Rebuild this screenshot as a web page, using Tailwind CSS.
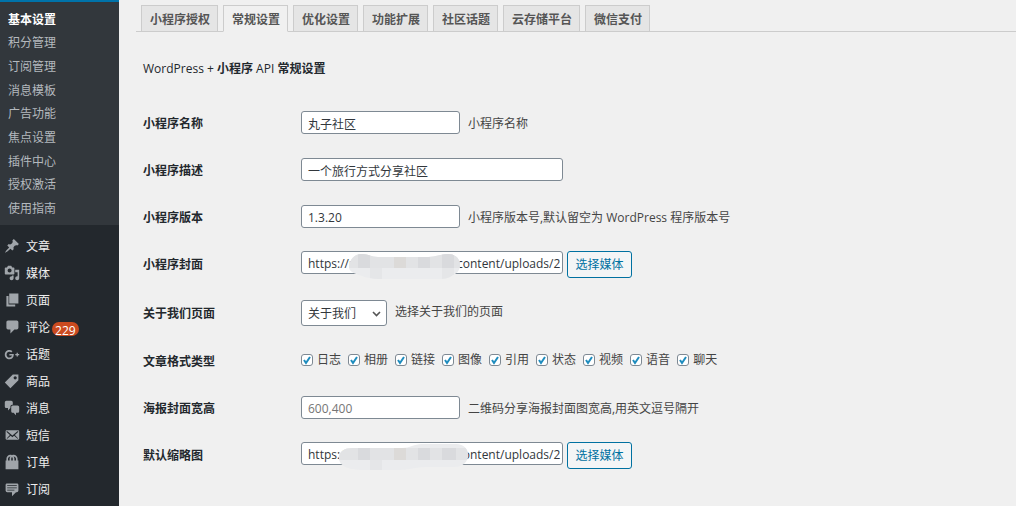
<!DOCTYPE html>
<html lang="zh-CN">
<head>
<meta charset="utf-8">
<title>常规设置</title>
<script src="https://cdn.jsdelivr.net/npm/@tailwindcss/browser@4"></script>
</head>
<body class="flex min-h-screen bg-[#f0f0f0] font-['Open_Sans','Noto_Sans_CJK_SC',sans-serif] text-xs text-[#444]">
<nav class="w-[119px] shrink-0 bg-[#23282d]" aria-label="主菜单">
  <ul class="grid h-[225px] auto-rows-fr border-t-2 border-[#0073aa] bg-[#32373c] pt-[6px] pb-1 pl-2 text-[#b4b9be]">
    <li class="flex items-center"><a href="#" class="font-bold text-white">基本设置</a></li>
    <li class="flex items-center"><a href="#">积分管理</a></li>
    <li class="flex items-center"><a href="#">订阅管理</a></li>
    <li class="flex items-center"><a href="#">消息模板</a></li>
    <li class="flex items-center"><a href="#">广告功能</a></li>
    <li class="flex items-center"><a href="#">焦点设置</a></li>
    <li class="flex items-center"><a href="#">插件中心</a></li>
    <li class="flex items-center"><a href="#">授权激活</a></li>
    <li class="flex items-center"><a href="#">使用指南</a></li>
  </ul>
  <ul class="pt-2 text-[#eee] [&_a]:flex [&_a]:h-[27px] [&_a]:items-center [&_a]:gap-[6px] [&_a]:pl-1 [&_svg]:mb-[2px] [&_svg]:size-4 [&_svg]:fill-[#a0a5aa]">
    <li><a href="#"><svg viewBox="0 0 20 20"><path d="M10.44 3.02l1.82-1.82 6.36 6.35-1.83 1.82c-1.05-.68-2.48-.57-3.41.36l-.75.75c-.92.93-1.04 2.35-.35 3.41l-1.83 1.82-2.41-2.41-2.8 2.79c-.42.42-3.38 2.71-3.8 2.29s1.86-3.39 2.28-3.81l2.79-2.79L4.1 9.36l1.83-1.82c1.05.69 2.48.57 3.4-.36l.75-.75c.93-.92 1.05-2.35.36-3.41z"/></svg>文章</a></li>
    <li><a href="#"><svg viewBox="0 0 20 20"><path d="M13 11V4c0-.55-.45-1-1-1h-1.67L9 1H5L3.67 3H2c-.55 0-1 .45-1 1v7c0 .55.45 1 1 1h10c.55 0 1-.45 1-1zM7 4.500c1.38 0 2.500 1.12 2.500 2.500S8.38 9.500 7 9.500 4.500 8.38 4.500 7 5.62 4.500 7 4.500zM14 6h5v10.500c0 1.38-1.12 2.500-2.500 2.500S14 17.88 14 16.500s1.12-2.500 2.500-2.500c.17 0 .34.02.5.05V9h-3V6zm-4 8.05V13h2v3.500c0 1.38-1.12 2.500-2.500 2.500S7 17.88 7 16.500 8.12 14 9.500 14c.17 0 .34.02.5.05z"/></svg>媒体</a></li>
    <li><a href="#"><svg viewBox="0 0 20 20"><path d="M6.500 14.500V2H18v12.500H6.500zm-.8 1H14V18H3V5h2.700v10.500z"/></svg>页面</a></li>
    <li><a href="#"><svg viewBox="0 0 20 20"><path d="M5 2h11c1.1 0 2 .9 2 2v7c0 1.1-.9 2-2 2h-3l-5 5v-5H5c-1.1 0-2-.9-2-2V4c0-1.1.9-2 2-2z"/></svg><span class="flex items-center gap-[2px]">评论<span class="mt-[2px] h-[14px] rounded-full bg-[#ca4a1f] px-[3px] text-xs leading-[18px] text-white">229</span></span></a></li>
    <li><a href="#"><svg viewBox="0 0 20 20"><path d="M6.73 10h5.4c.05.29.09.57.09.95 0 3.27-2.19 5.6-5.49 5.6-3.17 0-5.73-2.57-5.73-5.73 0-3.17 2.56-5.73 5.73-5.73 1.54 0 2.84.57 3.83 1.5l-1.55 1.5c-.43-.41-1.17-.89-2.28-.89-1.96 0-3.55 1.62-3.55 3.62 0 1.99 1.59 3.61 3.55 3.61 2.26 0 3.11-1.62 3.24-2.47H6.73V10zM19 10v1.64h-1.64v1.63h-1.63v-1.63h-1.64V10h1.64V8.36h1.63V10H19z"/></svg>话题</a></li>
    <li><a href="#"><svg viewBox="0 0 20 20"><path fill-rule="evenodd" d="M11 2h7v7L8 19l-7-7zm3 6c1.1 0 2-.9 2-2s-.9-2-2-2-2 .9-2 2 .9 2 2 2z"/></svg>商品</a></li>
    <li><a href="#"><svg viewBox="0 0 20 20"><path d="M11 6h-.82C9.07 6 8 7.2 8 8.16V10l-3 3v-3H3c-1.1 0-2-.9-2-2V3c0-1.1.9-2 2-2h6c1.1 0 2 .9 2 2v3zm0 1h6c1.1 0 2 .9 2 2v5c0 1.1-.9 2-2 2h-2v3l-3-3h-1c-1.1 0-2-.9-2-2V9c0-1.1.9-2 2-2z"/></svg>消息</a></li>
    <li><a href="#"><svg viewBox="0 0 20 20"><path d="M19 14.5v-9c0-.83-.67-1.5-1.5-1.5H3.49c-.83 0-1.5.67-1.5 1.5v9c0 .83.67 1.5 1.5 1.5H17.5c.83 0 1.5-.67 1.5-1.5zm-1.31-9.11c.33.33.15.67-.03.84L13.6 9.95l3.9 4.06c.12.14.2.36.06.51-.13.16-.43.15-.56.05l-4.37-3.73-2.14 1.95-2.13-1.95-4.37 3.73c-.13.1-.43.11-.56-.05-.14-.15-.06-.37.06-.51l3.9-4.06-4.06-3.72c-.18-.17-.36-.51-.03-.84s.67-.17.95.07l6.24 5.04 6.25-5.04c.28-.24.62-.4.95-.07z"/></svg>短信</a></li>
    <li><a href="#"><svg viewBox="0 0 20 20"><path d="M17 8h1v11H2V8h1V6c0-2.76 2.24-5 5-5 .71 0 1.39.15 2 .42.61-.27 1.29-.42 2-.42 2.76 0 5 2.24 5 5v2zM5 6v2h2V6c0-1.13.39-2.16 1.02-3H8C6.35 3 5 4.35 5 6zm10 2V6c0-1.65-1.35-3-3-3h-.02c.63.84 1.02 1.87 1.02 3v2h2zm-5-4.22C9.39 4.33 9 5.12 9 6v2h2V6c0-.88-.39-1.67-1-2.22z"/></svg>订单</a></li>
    <li><a href="#"><svg viewBox="0 0 20 20"><path d="M4 3h12c.55 0 1.02.2 1.41.59S18 4.45 18 5v7c0 .55-.2 1.02-.59 1.41S16.55 14 16 14h-1l-5 5v-5H4c-.55 0-1.02-.2-1.41-.59S2 12.55 2 12V5c0-.55.2-1.02.59-1.41S3.45 3 4 3zm12 2H4v1h12V5zm0 3H4v1h12V8zm-3 3H4v1h9v-1z"/></svg>订阅</a></li>
  </ul>
</nav>
<main class="min-w-0 flex-1 pt-[5px] pl-[17px]">
  <nav class="flex gap-[5px] border-b border-[#ccc] pl-[5px] font-bold text-[#555] [&_a]:-mb-px [&_a]:h-[27px] [&_a]:border [&_a]:border-[#ccc] [&_a]:pr-[7px] [&_a]:pl-[8px] [&_a]:leading-[27px]" aria-label="设置分类">
    <a href="#" class="bg-[#e5e5e5]">小程序授权</a>
    <a href="#" aria-current="page" class="border-b-[#f0f0f0]! bg-[#f0f0f0]">常规设置</a>
    <a href="#" class="bg-[#e5e5e5]">优化设置</a>
    <a href="#" class="bg-[#e5e5e5]">功能扩展</a>
    <a href="#" class="bg-[#e5e5e5]">社区话题</a>
    <a href="#" class="bg-[#e5e5e5]">云存储平台</a>
    <a href="#" class="bg-[#e5e5e5]">微信支付</a>
  </nav>
  <form class="pl-[7px]">
    <h1 class="mt-7 mb-[22px] leading-[18px] text-[#23282d]">WordPress + <b>小程序</b> API <b>常规设置</b></h1>
    <div class="[&>div]:flex [&>div]:h-[47px] [&>div]:items-center [&>div>:first-child]:w-[158px] [&>div>:first-child]:shrink-0 [&>div>:first-child]:font-bold [&>div>:first-child]:text-[#23282d] [&_input[type=text]]:mb-[2px] [&_input[type=text]]:h-[23px] [&_input[type=text]]:rounded-[3px] [&_input[type=text]]:border [&_input[type=text]]:border-[#7e8993] [&_input[type=text]]:bg-white [&_input[type=text]]:pt-[2px] [&_input[type=text]]:pl-[6px] [&_input[type=text]]:text-[#32373c]">
      <div><label for="name">小程序名称</label><input id="name" type="text" value="丸子社区" class="mr-2 w-[159px]"><span>小程序名称</span></div>
      <div><label for="desc">小程序描述</label><input id="desc" type="text" value="一个旅行方式分享社区" class="w-[262px]"></div>
      <div><label for="ver">小程序版本</label><input id="ver" type="text" value="1.3.20" class="mr-2 w-[159px]"><span>小程序版本号,默认留空为 WordPress 程序版本号</span></div>
      <div><label for="cover">小程序封面</label>
        <span class="relative flex items-start gap-1"><input id="cover" type="text" value="https://r.example.com/wp-content/uploads/2" class="w-[262px]">
          <svg class="absolute top-[2px] left-[47px] h-[28px] w-[113px]" viewBox="0 0 113 28"><defs><clipPath id="m1"><path d="M1 14C2 5 7 1 14 1c7 0 9 3 16 3h50c8 0 12-3 20-3 8 0 12 5 12 11s-4 9-7 10c-5 4-9 4-17 4H34c-12 0-17-2-23-4C5 20 1 18 1 14z"/></clipPath></defs><g clip-path="url(#m1)"><path fill="#ebecee" d="M0 0h113v28H0z"/><path fill="#e2e3e5" d="M0 0h113v15H0z"/><path fill="#d9dadd" d="M10 0h12v15H10zM70 4h12v11H70zM94 0h12v15H94z"/><path fill="#dcdad8" d="M46 4h12v11H46z"/><path fill="#e5e6e8" d="M22 15h12v13H22zM94 15h12v13H94z"/></g></svg>
          <button type="button" class="h-[27px] w-[65px] rounded-[3px] border border-[#0071a1] bg-[#f3f5f6] text-[#0071a1]">选择媒体</button></span></div>
      <div class="h-[50px]!"><label for="about" class="pt-[2px]">关于我们页面</label>
        <span class="relative mr-2 flex"><select id="about" class="h-[26px] w-[86px] appearance-none rounded-[3px] border border-[#7e8993] bg-white pt-[2px] pl-[6px] text-[#32373c]"><option>关于我们</option></select><svg class="pointer-events-none absolute top-[10px] right-[6px] h-2 w-[9px] fill-none stroke-[#555] stroke-[1.6]" viewBox="0 0 9 8"><path d="M1 2l3.500 3.500L8 2"/></svg></span><span class="pb-[3px]">选择关于我们的页面</span></div>
      <div role="group" aria-labelledby="fmt"><span id="fmt">文章格式类型</span>
        <div class="flex gap-[7px] pb-[3px] [&_input]:size-3 [&_input]:appearance-none [&_input]:rounded-[3px] [&_input]:border [&_input]:border-[#7e8993] [&_input]:bg-white [&_label]:relative [&_label]:flex [&_label]:items-center [&_label]:gap-1 [&_svg]:pointer-events-none [&_svg]:absolute [&_svg]:left-0 [&_svg]:size-3 [&_svg]:fill-none [&_svg]:stroke-[#1e8cbe] [&_svg]:stroke-2">
          <label><input type="checkbox" checked><svg viewBox="0 0 12 12"><path d="M3 6l2 3 4-6"/></svg>日志</label>
          <label><input type="checkbox" checked><svg viewBox="0 0 12 12"><path d="M3 6l2 3 4-6"/></svg>相册</label>
          <label><input type="checkbox" checked><svg viewBox="0 0 12 12"><path d="M3 6l2 3 4-6"/></svg>链接</label>
          <label><input type="checkbox" checked><svg viewBox="0 0 12 12"><path d="M3 6l2 3 4-6"/></svg>图像</label>
          <label><input type="checkbox" checked><svg viewBox="0 0 12 12"><path d="M3 6l2 3 4-6"/></svg>引用</label>
          <label><input type="checkbox" checked><svg viewBox="0 0 12 12"><path d="M3 6l2 3 4-6"/></svg>状态</label>
          <label><input type="checkbox" checked><svg viewBox="0 0 12 12"><path d="M3 6l2 3 4-6"/></svg>视频</label>
          <label><input type="checkbox" checked><svg viewBox="0 0 12 12"><path d="M3 6l2 3 4-6"/></svg>语音</label>
          <label><input type="checkbox" checked><svg viewBox="0 0 12 12"><path d="M3 6l2 3 4-6"/></svg>聊天</label>
        </div></div>
      <div><label for="poster">海报封面宽高</label><input id="poster" type="text" placeholder="600,400" class="mr-2 w-[159px] placeholder:text-[#757575]"><span>二维码分享海报封面图宽高,用英文逗号隔开</span></div>
      <div><label for="thumb">默认缩略图</label>
        <span class="relative flex items-start gap-1"><input id="thumb" type="text" value="https://r.example.com/wp-content/uploads/2" class="w-[262px]">
          <svg class="absolute top-[1px] left-[37px] h-[28px] w-[131px]" viewBox="0 0 131 28"><defs><clipPath id="m2"><path d="M1 15C1 8 7 5 14 5h50c8 0 12-4 20-4h34c8 0 12 5 12 11s-4 12-14 12H88c-12 0-16 3-27 3H27C8 27 1 22 1 15z"/></clipPath></defs><g clip-path="url(#m2)"><path fill="#ebecee" d="M0 0h131v28H0z"/><path fill="#e2e3e5" d="M0 5h131v12H0z"/><path fill="#d9dadd" d="M20 5h12v12H20zM80 5h12v12H80zM104 5h14v12h-14z"/><path fill="#dcdad8" d="M56 5h12v12H56z"/><path fill="#e5e6e8" d="M32 17h12v11H32z"/></g></svg>
          <button type="button" class="h-[27px] w-[65px] rounded-[3px] border border-[#0071a1] bg-[#f3f5f6] text-[#0071a1]">选择媒体</button></span></div>
    </div>
  </form>
</main>
</body>
</html>
